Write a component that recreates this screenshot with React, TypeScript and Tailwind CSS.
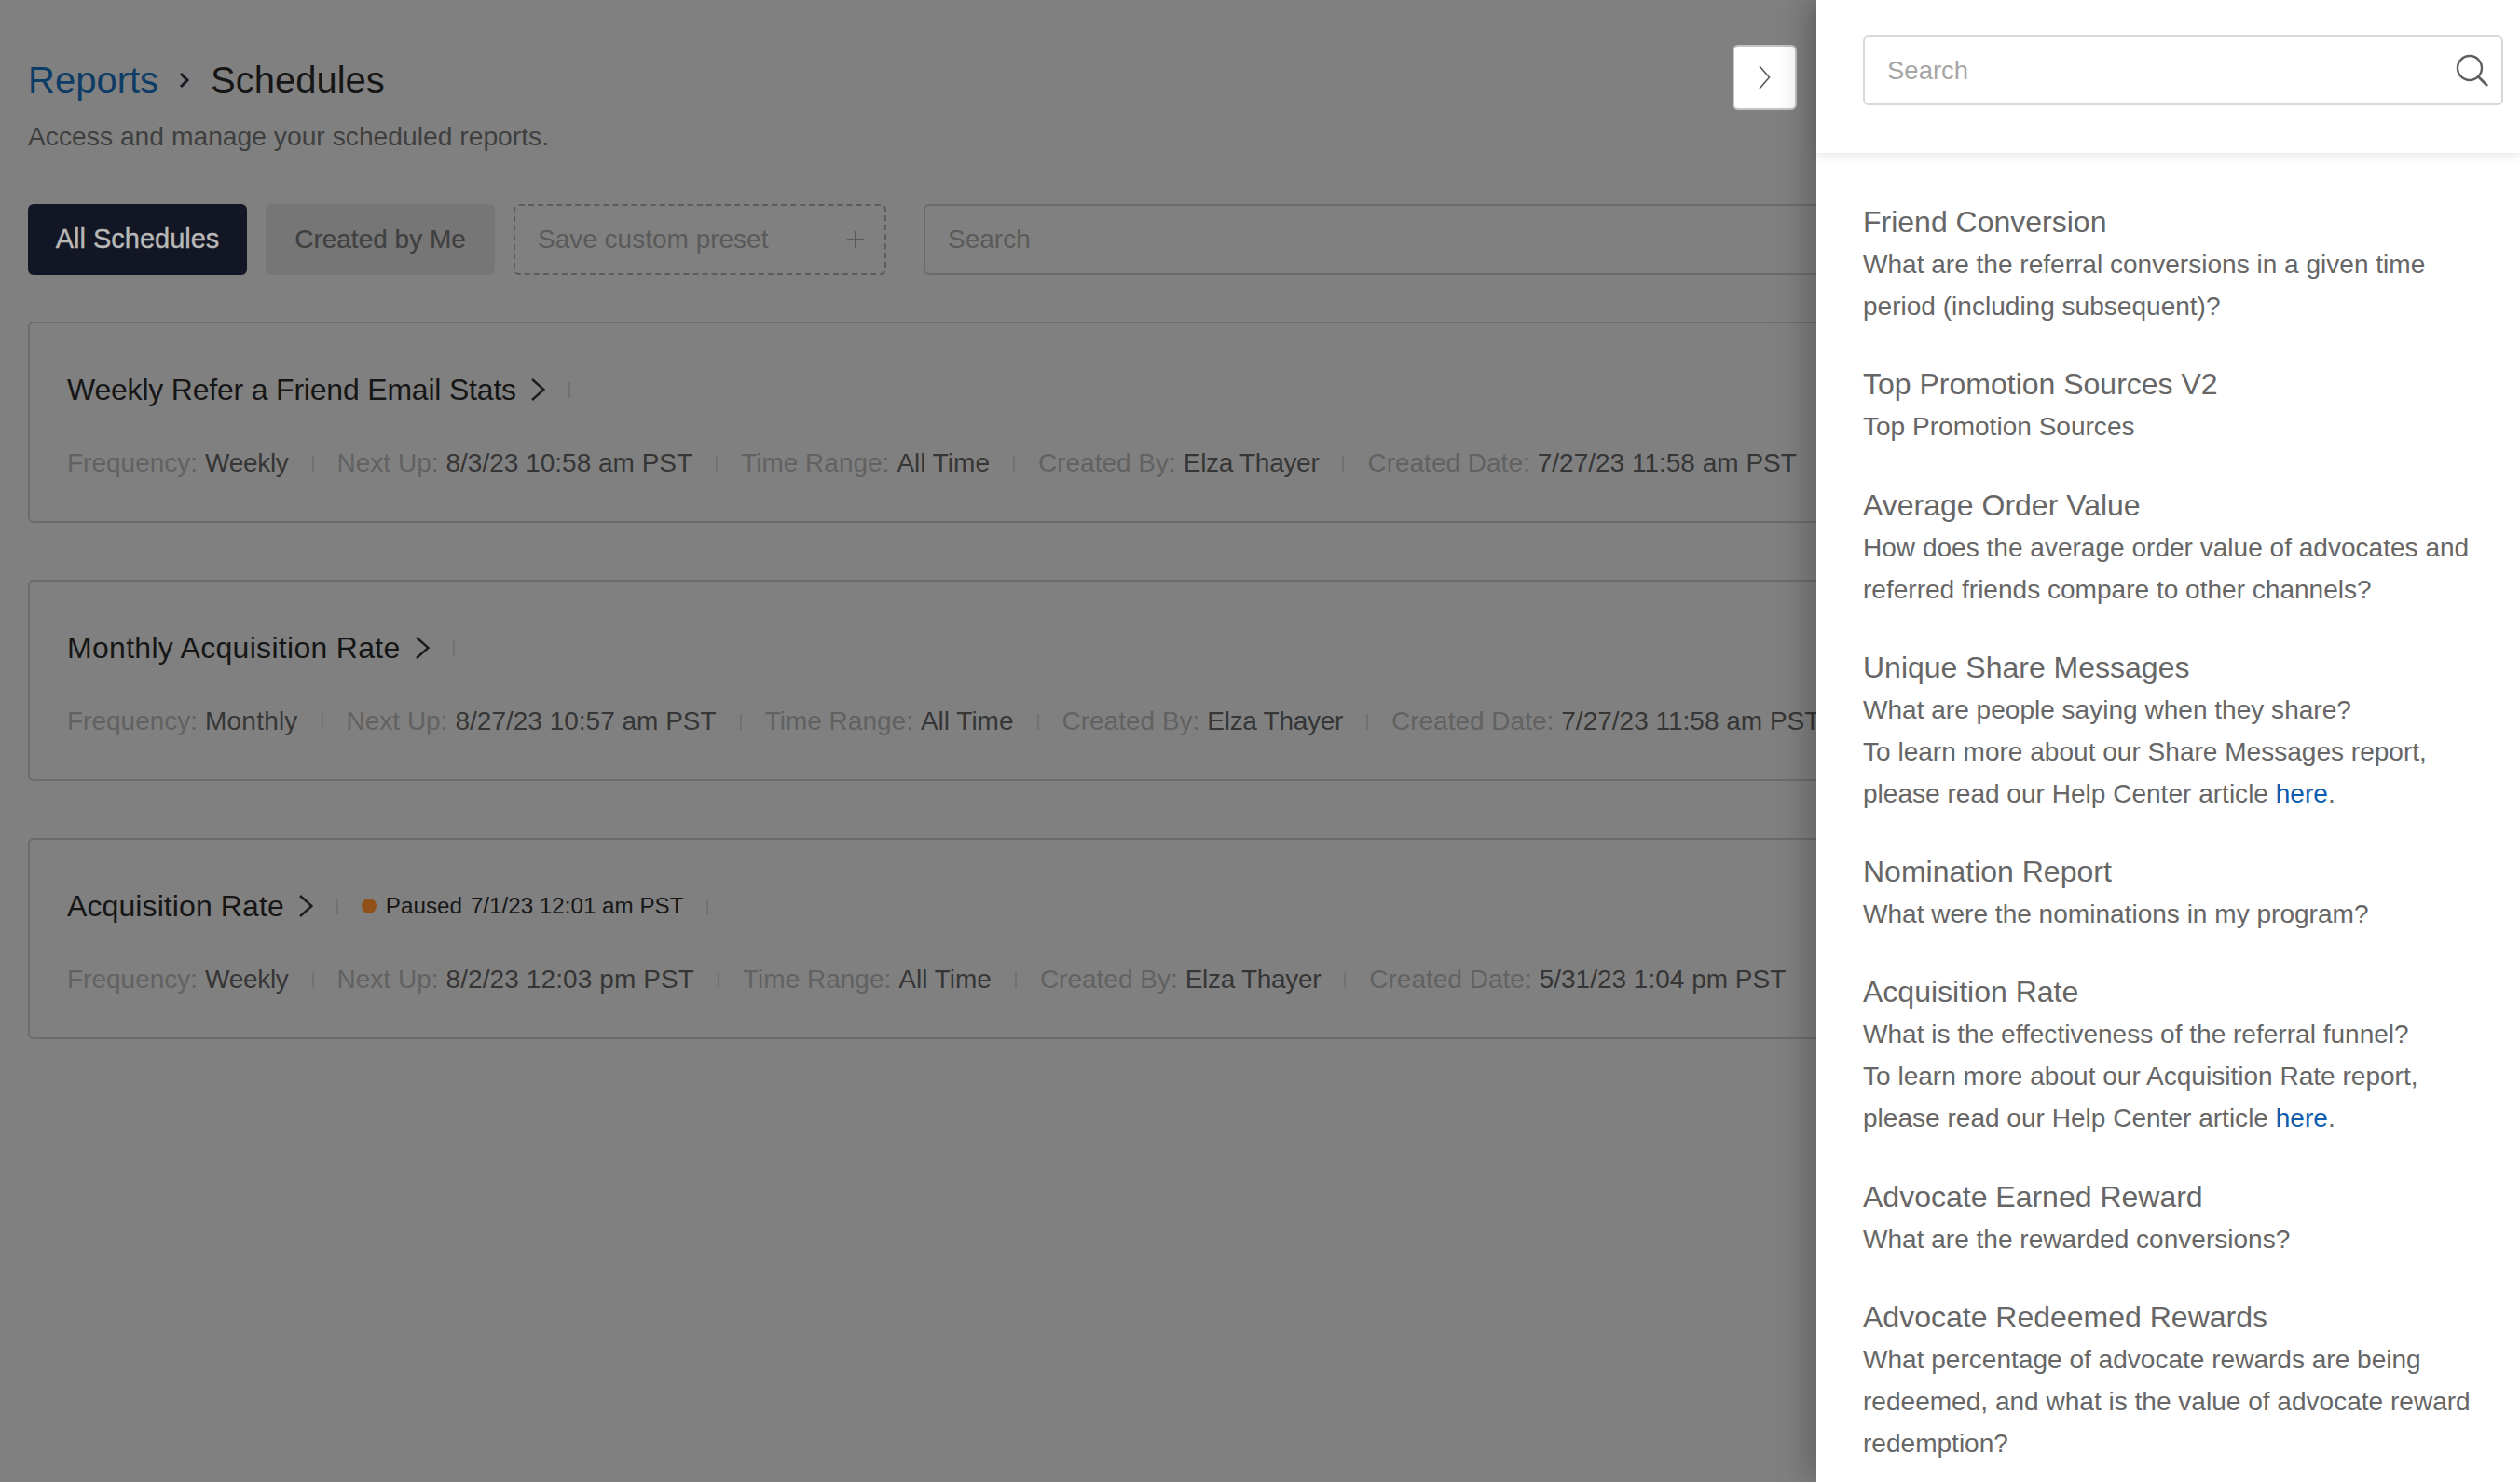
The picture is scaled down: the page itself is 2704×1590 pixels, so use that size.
import React from "react";

type Item = [string, string, string?];

const Chevron = ({ w, h, color, sw }: { w: number; h: number; color: string; sw: number }) => (
  <svg width={w} height={h} viewBox={`0 0 ${w} ${h}`} fill="none" className="shrink-0">
    <path d={`M1 1 L${w - 1.5} ${h / 2} L1 ${h - 1}`} stroke={color} strokeWidth={sw} />
  </svg>
);

const Sep = () => <span className="mx-[25px] h-[17px] w-[2px] shrink-0 bg-[#727272]" />;

const Meta = ({ items }: { items: Item[] }) => (
  <div className="flex items-center whitespace-nowrap text-[28px] leading-[44px]">
    {items.map(([k, v, track], i) => (
      <React.Fragment key={k}>
        {i > 0 && <Sep />}
        <span className="text-[#626262]">{k}:</span>
        <span className={`ml-[8px] text-[#363636] ${track ?? ""}`}>{v}</span>
      </React.Fragment>
    ))}
  </div>
);

const Card = ({
  title,
  track,
  extra,
  items,
}: {
  title: string;
  track: string;
  extra?: React.ReactNode;
  items: Item[];
}) => (
  <div className="flex h-[216px] flex-col rounded-[6px] border-2 border-[#6c6c6c] pl-[40px]">
    <div className="mt-[49px] flex h-[44px] items-center whitespace-nowrap">
      <span className={`text-[32px] leading-[44px] text-[#161616] ${track}`}>{title}</span>
      <span className="ml-[16px] flex">
        <Chevron w={15} h={24} color="#1c1c1c" sw={2.4} />
      </span>
      <Sep />
      {extra}
    </div>
    <div className="mt-[35px]">
      <Meta items={items} />
    </div>
  </div>
);

const reports: { t: string; d: React.ReactNode }[] = [
  {
    t: "Friend Conversion",
    d: (
      <>
        What are the referral conversions in a given time
        <br />
        period (including subsequent)?
      </>
    ),
  },
  { t: "Top Promotion Sources V2", d: "Top Promotion Sources" },
  {
    t: "Average Order Value",
    d: (
      <>
        How does the average order value of advocates and
        <br />
        referred friends compare to other channels?
      </>
    ),
  },
  {
    t: "Unique Share Messages",
    d: (
      <>
        What are people saying when they share?
        <br />
        To learn more about our Share Messages report,
        <br />
        please read our Help Center article <span className="text-[#0b5cad]">here</span>.
      </>
    ),
  },
  { t: "Nomination Report", d: "What were the nominations in my program?" },
  {
    t: "Acquisition Rate",
    d: (
      <>
        What is the effectiveness of the referral funnel?
        <br />
        To learn more about our Acquisition Rate report,
        <br />
        please read our Help Center article <span className="text-[#0b5cad]">here</span>.
      </>
    ),
  },
  { t: "Advocate Earned Reward", d: "What are the rewarded conversions?" },
  {
    t: "Advocate Redeemed Rewards",
    d: (
      <>
        What percentage of advocate rewards are being
        <br />
        redeemed, and what is the value of advocate reward
        <br />
        redemption?
      </>
    ),
  },
];

export default function App() {
  return (
    <div className="relative h-[1590px] w-[2704px] overflow-hidden bg-[#808080] font-['Liberation_Sans',sans-serif]">
      <div className="w-[2000px] pl-[30px] pt-[60px]">
        <div className="flex h-[52px] items-center text-[40px] leading-[52px]">
          <span className="text-[#0d3c66]">Reports</span>
          <svg width="14" height="20" viewBox="0 0 14 20" fill="none" className="mx-[21px] shrink-0">
            <path d="M3 3 L10 10 L3 17" stroke="#161a22" strokeWidth="3" />
          </svg>
          <span className="text-[#161616]">Schedules</span>
        </div>
        <p className="mt-[12px] text-[28.25px] leading-[44px] text-[#3f3f3f]">Access and manage your scheduled reports.</p>

        <div className="mt-[51px] flex h-[76px] items-stretch text-[28px]">
          <div className="flex w-[235px] items-center justify-center rounded-[6px] bg-[#131624] text-[29px] text-[#b8b8b8] [-webkit-text-stroke:0.4px_#b8b8b8]">All Schedules</div>
          <div className="ml-[20px] flex w-[246px] items-center justify-center rounded-[6px] bg-[#767676] text-[#404040] [-webkit-text-stroke:0.2px_#404040]">Created by Me</div>
          <div className="ml-[20px] flex w-[400px] items-center justify-between rounded-[6px] border-2 border-dashed border-[#5c5c5c] pl-[24px] pr-[21px] text-[#5a5a5a]">
            <span>Save custom preset</span>
            <svg width="20" height="20" viewBox="0 0 20 20" fill="none">
              <path d="M10 1 V19 M1 10 H19" stroke="#5a5a5a" strokeWidth="2" />
            </svg>
          </div>
          <div className="ml-[40px] flex flex-1 items-center rounded-[6px] border-2 border-[#6c6c6c] pl-[24px] text-[#5a5a5a]">Search</div>
        </div>

        <div className="mt-[50px] flex flex-col gap-[61px]">
          <Card
            title="Weekly Refer a Friend Email Stats"
            track="tracking-[-0.2px]"
            items={[
              ["Frequency", "Weekly", "tracking-[-0.3px]"],
              ["Next Up", "8/3/23 10:58 am PST"],
              ["Time Range", "All Time"],
              ["Created By", "Elza Thayer", "tracking-[-0.3px]"],
              ["Created Date", "7/27/23 11:58 am PST"],
            ]}
          />
          <Card
            title="Monthly Acquisition Rate"
            track="tracking-[0.3px]"
            items={[
              ["Frequency", "Monthly", "tracking-[0.2px]"],
              ["Next Up", "8/27/23 10:57 am PST"],
              ["Time Range", "All Time"],
              ["Created By", "Elza Thayer", "tracking-[-0.3px]"],
              ["Created Date", "7/27/23 11:58 am PST"],
            ]}
          />
          <Card
            title="Acquisition Rate"
            track="tracking-[0.1px]"
            extra={
              <div className="flex items-center text-[24.2px] leading-[44px] text-[#161616]">
                <span className="h-[16px] w-[16px] rounded-full bg-[#8f5118]" />
                <span className="ml-[10px]">Paused</span>
                <span className="ml-[9px]">7/1/23 12:01 am PST</span>
                <Sep />
              </div>
            }
            items={[
              ["Frequency", "Weekly", "tracking-[-0.3px]"],
              ["Next Up", "8/2/23 12:03 pm PST", "tracking-[0.1px]"],
              ["Time Range", "All Time"],
              ["Created By", "Elza Thayer", "tracking-[-0.3px]"],
              ["Created Date", "5/31/23 1:04 pm PST"],
            ]}
          />
        </div>
      </div>

      <div className="absolute left-[1859px] top-[48px] flex h-[70px] w-[69px] items-center justify-center rounded-[6px] border-2 border-[#c4c4c4] bg-white">
        <Chevron w={13} h={26} color="#555555" sw={1.5} />
      </div>

      <aside className="absolute bottom-0 left-[1949px] right-0 top-0 bg-white shadow-[-12px_0_30px_rgba(0,0,0,0.22)]">
        <div className="relative h-[164px] shadow-[0_3px_12px_rgba(0,0,0,0.1)]">
          <div className="absolute left-[50px] top-[38px] flex h-[75px] w-[687px] items-center justify-between rounded-[6px] border-2 border-[#d8d8d8] pl-[24px] pr-[13px] text-[27.5px] text-[#a6a6a6]">
            <span>Search</span>
            <svg width="36" height="36" viewBox="0 0 36 36" fill="none">
              <circle cx="15" cy="15" r="13" stroke="#5f5f5f" strokeWidth="2.4" />
              <path d="M24.5 24.5 L34 34" stroke="#5f5f5f" strokeWidth="2.8" />
            </svg>
          </div>
        </div>
        <div className="flex flex-col gap-[39.3px] pl-[50px] pt-[52px] text-[#666666]">
          {reports.map((r) => (
            <div key={r.t} className="whitespace-nowrap leading-[45px]">
              <div className="text-[32px]">{r.t}</div>
              <div className="text-[28.05px]">{r.d}</div>
            </div>
          ))}
        </div>
      </aside>
    </div>
  );
}
